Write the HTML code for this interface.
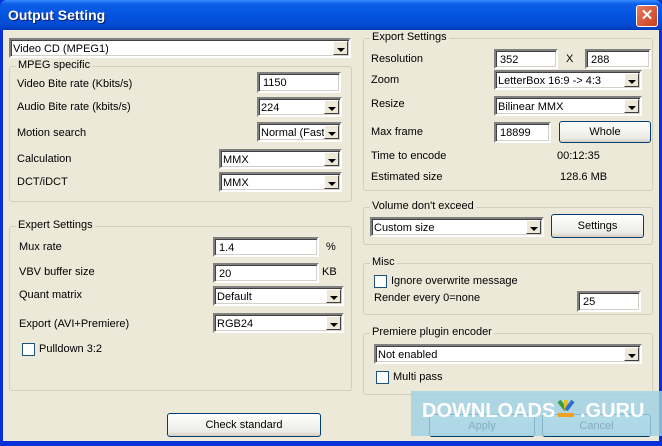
<!DOCTYPE html><html><head><style>
body{margin:0;width:662px;height:446px;overflow:hidden;font:11px/1 "Liberation Sans",sans-serif;color:#000;position:relative;background:#0831d9}
.a{position:absolute}
#win{position:absolute;left:3px;top:30px;width:656px;height:411px;background:#ece9d8}
#title{position:absolute;left:0;top:0;width:662px;height:30px;background:linear-gradient(#3a8cff 0,#0a5fe8 4px,#0553e0 50%,#0349d0 85%,#023bb8 100%);border-radius:7px 7px 0 0}
#title span{position:absolute;left:8px;top:8px;color:#fff;font-weight:bold;font-size:14px;text-shadow:1px 1px #0a1e70}
.close{position:absolute;left:636px;top:5px;width:20px;height:20px;border:1px solid #fff;border-radius:3px;background:linear-gradient(135deg,#e87a5c,#c8401f);color:#fff;font-weight:bold;font-size:15px;text-align:center;line-height:20px}
.g{position:absolute;border:1px solid #d0d0bf;border-radius:3px}
.g>b{position:absolute;top:-7px;left:6px;background:#ece9d8;padding:0 2px;font-weight:normal}
.t,.c{position:absolute;background:#fff;border:2px solid;border-color:#808080 #fff #fff #808080;box-shadow:inset 1px 1px #404040,inset -1px -1px #d4d0c8;box-sizing:border-box;padding:4px 4px 0;white-space:nowrap;overflow:hidden}
.c{padding-left:2px}
.c i{position:absolute;right:1px;top:1px;bottom:1px;width:15px;background:#ece9d8;border:1px solid #fff;border-right-color:#404040;border-bottom-color:#404040;box-sizing:border-box}
.c i:after{content:"";position:absolute;left:3px;top:6px;border:4px solid transparent;border-top:4px solid #000;border-bottom:0}
.btn{position:absolute;box-sizing:border-box;border:1px solid #003c74;border-radius:3px;background:linear-gradient(#fff,#ecebe6 80%,#d6d0c5);text-align:center;line-height:21px}
.cb{position:absolute;width:11px;height:11px;border:1px solid #1c5180;background:#fff}
.l{position:absolute;white-space:nowrap}
</style></head><body>
<div id="title"><span>Output Setting</span><div class="close">✕</div></div>
<div id="win"></div>
<div class="c" style="left:9px;top:38px;width:342px;height:20px">Video CD (MPEG1)<i></i></div>
<div class="g" style="left:9px;top:66px;width:341px;height:134px"><b>MPEG specific</b></div>
<div class="l" style="left:17px;top:79px">Video Bite rate (Kbits/s)</div>
<div class="t" style="left:257px;top:72px;width:84px;height:21px">1150</div>
<div class="l" style="left:17px;top:102px">Audio Bite rate (kbits/s)</div>
<div class="c" style="left:257px;top:97px;width:85px;height:20px">224<i></i></div>
<div class="l" style="left:17px;top:128px">Motion search</div>
<div class="c" style="left:257px;top:122px;width:85px;height:20px">Normal (Fast)<i></i></div>
<div class="l" style="left:17px;top:154px">Calculation</div>
<div class="c" style="left:219px;top:149px;width:123px;height:20px">MMX<i></i></div>
<div class="l" style="left:17px;top:177px">DCT/iDCT</div>
<div class="c" style="left:219px;top:172px;width:123px;height:20px">MMX<i></i></div>
<div class="g" style="left:9px;top:226px;width:341px;height:163px"><b>Expert Settings</b></div>
<div class="l" style="left:19px;top:242px">Mux rate</div>
<div class="t" style="left:213px;top:237px;width:106px;height:20px">1.4</div>
<div class="l" style="left:326px;top:242px">%</div>
<div class="l" style="left:19px;top:267px">VBV buffer size</div>
<div class="t" style="left:213px;top:263px;width:106px;height:20px">20</div>
<div class="l" style="left:322px;top:267px">KB</div>
<div class="l" style="left:19px;top:290px">Quant matrix</div>
<div class="c" style="left:213px;top:286px;width:131px;height:20px">Default<i></i></div>
<div class="l" style="left:19px;top:319px">Export (AVI+Premiere)</div>
<div class="c" style="left:213px;top:313px;width:131px;height:20px">RGB24<i></i></div>
<div class="cb" style="left:22px;top:343px"></div><div class="l" style="left:39px;top:344px">Pulldown 3:2</div>
<div class="g" style="left:363px;top:38px;width:288px;height:151px"><b>Export Settings</b></div>
<div class="l" style="left:371px;top:54px">Resolution</div>
<div class="t" style="left:494px;top:49px;width:64px;height:20px">352</div>
<div class="l" style="left:566px;top:54px">X</div>
<div class="t" style="left:585px;top:49px;width:66px;height:20px">288</div>
<div class="l" style="left:371px;top:75px">Zoom</div>
<div class="c" style="left:494px;top:70px;width:148px;height:20px">LetterBox 16:9 -&gt; 4:3<i></i></div>
<div class="l" style="left:371px;top:99px">Resize</div>
<div class="c" style="left:494px;top:96px;width:148px;height:20px">Bilinear MMX<i></i></div>
<div class="l" style="left:371px;top:127px">Max frame</div>
<div class="t" style="left:494px;top:122px;width:57px;height:21px">18899</div>
<div class="btn" style="left:559px;top:121px;width:92px;height:22px">Whole</div>
<div class="l" style="left:371px;top:151px">Time to encode</div>
<div class="l" style="left:557px;top:151px">00:12:35</div>
<div class="l" style="left:371px;top:172px">Estimated size</div>
<div class="l" style="left:560px;top:172px">128.6 MB</div>
<div class="g" style="left:363px;top:207px;width:288px;height:36px"><b>Volume don't exceed</b></div>
<div class="c" style="left:370px;top:217px;width:174px;height:20px">Custom size<i></i></div>
<div class="btn" style="left:551px;top:214px;width:93px;height:24px;line-height:22px">Settings</div>
<div class="g" style="left:363px;top:263px;width:288px;height:50px"><b>Misc</b></div>
<div class="cb" style="left:374px;top:275px"></div><div class="l" style="left:391px;top:276px">Ignore overwrite message</div>
<div class="l" style="left:374px;top:293px">Render every 0=none</div>
<div class="t" style="left:577px;top:291px;width:64px;height:21px">25</div>
<div class="g" style="left:363px;top:333px;width:288px;height:60px"><b>Premiere plugin encoder</b></div>
<div class="c" style="left:374px;top:344px;width:268px;height:20px">Not enabled<i></i></div>
<div class="cb" style="left:376px;top:371px"></div><div class="l" style="left:393px;top:372px">Multi pass</div>
<div class="btn" style="left:167px;top:413px;width:154px;height:24px;line-height:22px">Check standard</div>
<div class="btn" style="left:429px;top:414px;width:106px;height:23px;line-height:22px">Apply</div>
<div class="btn" style="left:542px;top:414px;width:109px;height:23px;line-height:22px">Cancel</div>
<div class="a" style="left:411px;top:391px;width:251px;height:45px;background:rgba(160,210,228,.82)"></div>
<div class="l" style="left:422px;top:401px;color:#fff;font-size:20px;font-weight:bold">DOWNLOADS</div>
<div class="a" style="left:556px;top:398px;width:20px;height:20px">
<svg width="20" height="20"><path d="M3 3 L10 12" stroke="#3a9e3a" stroke-width="4"/><path d="M10 2 L10 12" stroke="#e8c020" stroke-width="4"/><path d="M17 3 L10 12" stroke="#3070d0" stroke-width="4"/><rect x="2" y="15" width="16" height="4" fill="#f0a020"/></svg></div>
<div class="l" style="left:580px;top:401px;color:#fff;font-size:20px;font-weight:bold">.GURU</div>
</body></html>
